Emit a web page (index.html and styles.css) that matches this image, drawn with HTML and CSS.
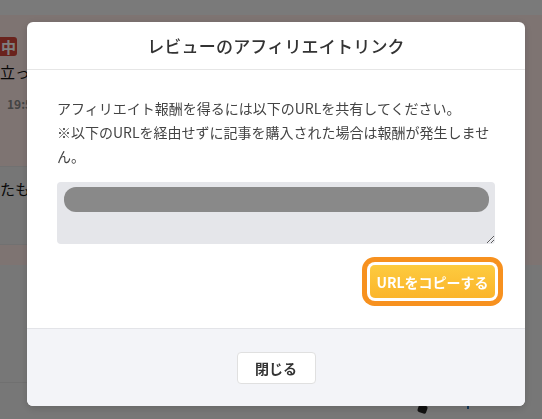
FILE: index.html
```html
<!DOCTYPE html>
<html lang="ja">
<head>
<meta charset="utf-8">
<title>レビューのアフィリエイトリンク</title>
<link rel="stylesheet" href="styles.css">
</head>
<body>
  <div class="page">
    <div class="page-top"></div>
    <div class="page-pink">
      <div class="feed">
        <div class="feed-item">
          <span class="badge">中</span>
          <p class="feed-title">立って</p>
          <span class="feed-time">19:58</span>
        </div>
        <div class="feed-card">
          <p class="feed-title">たもの</p>
        </div>
      </div>
    </div>
    <div class="page-gray">
      <div class="page-row"></div>
      <div class="page-icons">
        <span class="dot"></span>
        <span class="tick"></span>
      </div>
    </div>
  </div>

  <div class="backdrop"></div>

  <div class="modal-layer">
    <div class="modal">
      <div class="modal-header">レビューのアフィリエイトリンク</div>
      <div class="modal-body">
        <p class="note">アフィリエイト報酬を得るには以下のURLを共有してください。<br>※以下のURLを経由せずに記事を購入された場合は報酬が発生しません。</p>
        <div class="url-box">
          <textarea class="url-field" readonly></textarea>
          <div class="url-mask"></div>
        </div>
        <div class="actions">
          <button class="copy-btn">URLをコピーする</button>
        </div>
      </div>
      <div class="modal-footer">
        <button class="close-btn">閉じる</button>
      </div>
    </div>
  </div>
</body>
</html>
```

FILE: styles.css
```css
* { box-sizing: border-box; }
body {
  margin: 0; width: 542px; height: 419px; overflow: hidden;
  font-family: "Noto Sans CJK JP", "Noto Sans", sans-serif; color: #333;
}

/* page behind the dialog */
.page { width: 542px; height: 419px; background: #eeeeee; }
.page-top { height: 15px; background: #f4f4f4; }
.page-pink { height: 250px; background: #fde8e5; padding-top: 22px; }
.feed { display: flex; flex-direction: column; }
.feed-item { height: 129px; display: flex; flex-direction: column; align-items: flex-start; }
.badge {
  background: #d4473a; color: #fff; height: 19px; width: 17px;
  font-size: 15px; font-weight: bold; line-height: 19px; padding-left: 1px; border-radius: 0 3px 3px 0;
}
.feed-title { margin: 5px 0 0; font-size: 15px; color: #111; line-height: 22px; }
.feed-time { margin-top: 14px; margin-left: 7px; font-size: 12px; line-height: 14px; font-weight: bold; color: #888; }
.feed-card {
  width: 500px; height: 79px; background: #ececec;
  border-top: 1px solid #e2e2e2; border-bottom: 1px solid #e2e2e2;
  padding-top: 6px;
}
.page-gray { display: flex; flex-direction: column; }
.page-row { height: 118px; border-bottom: 1px solid #e0e0e0; width: 30px; }
.page-icons { display: flex; gap: 40px; padding: 22px 0 0 418px; }
.dot { width: 9px; height: 8px; background: #222; border-radius: 2px; transform: rotate(20deg); }
.tick { width: 2px; height: 12px; background: #2a6fb0; margin-top: -8px; }

.backdrop {
  position: fixed; inset: 0; background: rgba(0, 0, 0, 0.5);
}

/* dialog */
.modal-layer { position: fixed; inset: 0; padding: 22px 0 0 27px; }
.modal {
  width: 498px; height: 384px; background: #fff; border-radius: 6px;
  display: flex; flex-direction: column; overflow: hidden;
  box-shadow: 0 2px 8px rgba(0,0,0,0.15);
}
.modal-header {
  height: 48px; border-bottom: 1px solid #e6e6e6;
  display: flex; align-items: center; justify-content: center;
  font-size: 17px; font-weight: 500; color: #333; letter-spacing: 0.2px;
}
.modal-body { flex: 1; padding: 26px 30px 0; }
.note { margin: 0; font-size: 14px; line-height: 24px; color: #444; }
.url-box { position: relative; margin-top: 14px; }
.url-field {
  display: block; width: 100%; height: 62px; resize: vertical;
  background: #e5e6ea; border: none; border-radius: 4px; outline: none;
}
.url-mask {
  position: absolute; left: 7px; right: 6px; top: 5px; height: 25px;
  background: #898989; border-radius: 12px;
}
.actions { display: flex; justify-content: flex-end; margin-top: 21px; }
.copy-btn {
  width: 125px; height: 33px; border: none; border-radius: 5px;
  background: linear-gradient(#fdcb3f, #fbb52b); color: #fff;
  font-family: inherit; font-size: 14px; font-weight: bold;
  box-shadow: 0 0 0 3px #fff, 0 0 0 8px #f7911f;
}
.modal-footer {
  height: 78px; background: #f3f4f8; border-top: 1px solid #e3e4e8;
  display: flex; align-items: center; justify-content: center;
}
.close-btn {
  width: 79px; height: 32px; background: #fff; border: 1px solid #e0e0e0; border-radius: 4px;
  font-family: inherit; font-size: 14px; font-weight: bold; color: #333;
}
```
